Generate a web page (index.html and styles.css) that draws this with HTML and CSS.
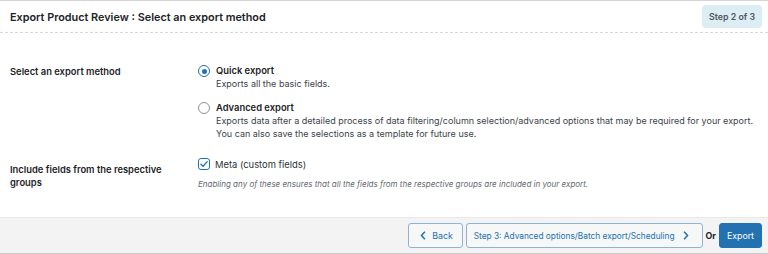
FILE: index.html
```html
<!DOCTYPE html>
<html>
<head>
<meta charset="utf-8">
<link rel="stylesheet" href="styles.css">
</head>
<body>
<div class="panel">
  <div class="header">
    <h2 class="title">Export Product Review : Select an export method</h2>
    <span class="step-badge">Step 2 of 3</span>
  </div>
  <div class="content">
    <div class="row row-method">
      <div class="label">Select an export method</div>
      <div class="options">
        <label class="option">
          <span class="radio checked"></span>
          <span class="opt-text">
            <span class="opt-title">Quick export</span>
            <span class="opt-desc">Exports all the basic fields.</span>
          </span>
        </label>
        <label class="option">
          <span class="radio"></span>
          <span class="opt-text">
            <span class="opt-title">Advanced export</span>
            <span class="opt-desc">Exports data after a detailed process of data filtering/column selection/advanced options that may be required for your export.<br>You can also save the selections as a template for future use.</span>
          </span>
        </label>
      </div>
    </div>
    <div class="row row-groups">
      <div class="label label-groups">Include fields from the respective groups</div>
      <div class="options">
        <label class="check-option">
          <span class="checkbox">
            <svg viewBox="0 0 12 12" width="10" height="10"><path d="M2.3 6.2 L4.9 8.7 L9.8 3.2" fill="none" stroke="#2271b1" stroke-width="1.6" stroke-linecap="round" stroke-linejoin="round"/></svg>
          </span>
          <span class="check-text">Meta (custom fields)</span>
        </label>
        <p class="hint">Enabling any of these ensures that all the fields from the respective groups are included in your export.</p>
      </div>
    </div>
  </div>
  <div class="footer">
    <button class="btn btn-outline btn-back"><svg viewBox="0 0 8 12" width="6" height="9"><path d="M6.5 1 L2 6 L6.5 11" fill="none" stroke="#2271b1" stroke-width="2"/></svg>Back</button>
    <button class="btn btn-outline btn-next">Step 3: Advanced options/Batch export/Scheduling<svg viewBox="0 0 8 12" width="6" height="9"><path d="M1.5 1 L6 6 L1.5 11" fill="none" stroke="#2271b1" stroke-width="2"/></svg></button>
    <span class="or">Or</span>
    <button class="btn btn-primary">Export</button>
  </div>
</div>
</body>
</html>
```
FILE: styles.css
```css
* { box-sizing: border-box; }
html, body { margin: 0; padding: 0; background: #fff; }
body {
  font-family: Inter, "Noto Sans", "Liberation Sans", sans-serif;
  color: #1d2327;
  width: 768px;
  height: 254px;
  overflow: hidden;
}
.panel {
  border-top: 1px solid #d5d5d5;
  height: 254px;
  display: flex;
  flex-direction: column;
}
.header {
  height: 32px;
  display: flex;
  align-items: center;
  justify-content: space-between;
  padding: 0 6px 0 10px;
  border-bottom: 1px dashed #d8d8d8;
}
.title {
  margin: 0;
  font-size: 10.85px;
  font-weight: 600;
  color: #1d2327;
}
.step-badge {
  background: #dcedf3;
  color: #50575e;
  font-size: 8.8px;
  font-weight: 600;
  padding: 0 7px;
  height: 23px;
  line-height: 23px;
  border-radius: 4px;
}
.content {
  flex: 1;
  padding: 28px 6px 0 10px;
}
.row {
  display: grid;
  grid-template-columns: 188px 1fr;
}
.row-groups { margin-top: 18px; }
.label {
  font-size: 9.4px;
  font-weight: 600;
  line-height: 13px;
  width: 160px;
  padding-top: 4px;
}
.label-groups { padding-top: 5px; }
.options { display: flex; flex-direction: column; }
.option {
  display: flex;
  align-items: flex-start;
  gap: 6px;
}
.option + .option { margin-top: 8px; }
.radio {
  width: 12px;
  height: 12px;
  border: 1px solid #8c8f94;
  border-radius: 50%;
  margin-top: 4px;
  flex: none;
  position: relative;
}
.radio.checked { border-color: #2271b1; }
.radio.checked::after {
  content: "";
  position: absolute;
  left: 2.5px; top: 2.5px;
  width: 5px; height: 5px;
  border-radius: 50%;
  background: #2271b1;
}
.opt-text { display: flex; flex-direction: column; }
.opt-title {
  font-size: 9.4px;
  font-weight: 600;
  line-height: 13px;
  padding-top: 3px;
}
.opt-desc {
  font-size: 9px;
  line-height: 13px;
  color: #3c434a;
}
.check-option {
  display: flex;
  align-items: center;
  gap: 5px;
}
.checkbox {
  width: 12px;
  height: 12px;
  border: 1px solid #2271b1;
  border-radius: 3px;
  display: flex;
  align-items: center;
  justify-content: center;
  flex: none;
}
.check-text { font-size: 9.4px; color: #2c3338; }
.hint {
  margin: 9px 0 0;
  font-size: 8px;
  font-style: italic;
  color: #646970;
}
.footer {
  height: 37px;
  background: #f3f3f3;
  border-top: 1px solid #e8e8e8;
  border-bottom: 1px solid #c8c8c8;
  display: flex;
  align-items: center;
  justify-content: flex-end;
  padding: 0 6px 0 10px;
  gap: 3px;
}
.btn {
  height: 25px;
  font-family: inherit;
  font-size: 8.3px;
  border-radius: 3px;
  display: flex;
  align-items: center;
  gap: 6px;
  padding: 0 9px 0 11px;
  cursor: pointer;
}
.btn-outline {
  background: #f6f7f7;
  border: 1px solid #8fb3d3;
  color: #2271b1;
}
.btn-back { font-size: 8.8px; }
.btn-next { padding: 0 13px 0 7px; gap: 8px; }
.btn-primary {
  background: #2271b1;
  border: 1px solid #2271b1;
  color: #fff;
  font-size: 8.8px;
  padding: 0 7px;
}
.or { font-size: 8.8px; font-weight: 700; color: #1d2327; }
```
